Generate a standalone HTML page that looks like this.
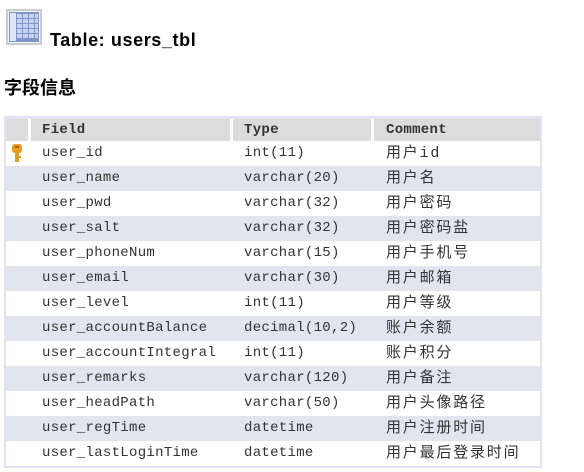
<!DOCTYPE html>
<html><head><meta charset="utf-8"><style>
body{margin:0;width:584px;height:472px;background:#fff;position:relative;overflow:hidden;font-family:"Liberation Sans","Noto Sans CJK SC",sans-serif}
.t{position:absolute;left:50px;top:30px;font-weight:bold;font-size:18px;letter-spacing:0.6px;color:#000}
.h{position:absolute;left:4px;top:74px;font-weight:bold;font-size:18px;color:#000}
.tbl{position:absolute;left:4px;top:116px;width:534px;border:2px solid #e6e0f4;border-top-width:3px}
.r{height:25px;position:relative;font-family:"Liberation Mono","Noto Sans CJK SC",monospace;font-size:14px;letter-spacing:0.3px;color:#333;line-height:25px}
.r span{position:absolute;top:0}
.a{left:36px}.b{left:238px}.c{left:380px;font-size:15px;letter-spacing:1.8px}
.s{background:#e3e5ee}
.hd{height:22px;line-height:22px;background:#fff;font-weight:bold}
.hd .c{font-size:14px;letter-spacing:0.3px}
.hd i{position:absolute;top:0;height:22px;background:#dcdcdc}
</style></head><body>
<svg style="position:absolute;left:6px;top:9px" width="36" height="36" viewBox="0 0 36 36">
<rect x="0" y="0" width="36" height="36" fill="#c8ccd4"/>
<rect x="2" y="2" width="32" height="32" fill="#f4f6fa"/>
<rect x="3" y="3" width="30" height="30" fill="#7f97c8"/>
<rect x="4" y="4" width="6" height="28" fill="#dfe6f4"/>
<g fill="#c7d3ee">
<rect x="11" y="5" width="5" height="4"/><rect x="17" y="5" width="5" height="4"/><rect x="23" y="5" width="5" height="4"/><rect x="29" y="5" width="3" height="4"/>
<rect x="11" y="10" width="5" height="4"/><rect x="17" y="10" width="5" height="4"/><rect x="23" y="10" width="5" height="4"/><rect x="29" y="10" width="3" height="4"/>
<rect x="11" y="15" width="5" height="4"/><rect x="17" y="15" width="5" height="4"/><rect x="23" y="15" width="5" height="4"/><rect x="29" y="15" width="3" height="4"/>
<rect x="11" y="20" width="5" height="4"/><rect x="17" y="20" width="5" height="4"/><rect x="23" y="20" width="5" height="4"/><rect x="29" y="20" width="3" height="4"/>
<rect x="11" y="25" width="5" height="4"/><rect x="17" y="25" width="5" height="4"/><rect x="23" y="25" width="5" height="4"/><rect x="29" y="25" width="3" height="4"/>
</g>
</svg>
<div class="t">Table: users_tbl</div>
<div class="h">字段信息</div>
<div class="tbl">
<div class="r hd"><i style="left:0;width:22px"></i><i style="left:25px;width:199px"></i><i style="left:227px;width:138px"></i><i style="left:368px;width:166px"></i><span class="a">Field</span><span class="b">Type</span><span class="c">Comment</span></div>
<div class="r"><svg style="position:absolute;left:5px;top:3px" width="12" height="20" viewBox="0 0 12 20"><rect x="1" y="0" width="10" height="9" rx="3" fill="#e89a1a"/><rect x="4" y="8" width="4" height="10" fill="#e89a1a"/><rect x="8" y="12" width="2" height="2" fill="#e89a1a"/><rect x="4" y="2" width="4" height="2" fill="#a35a00"/></svg><span class="a">user_id</span><span class="b">int(11)</span><span class="c">用户id</span></div>
<div class="r s"><span class="a">user_name</span><span class="b">varchar(20)</span><span class="c">用户名</span></div>
<div class="r"><span class="a">user_pwd</span><span class="b">varchar(32)</span><span class="c">用户密码</span></div>
<div class="r s"><span class="a">user_salt</span><span class="b">varchar(32)</span><span class="c">用户密码盐</span></div>
<div class="r"><span class="a">user_phoneNum</span><span class="b">varchar(15)</span><span class="c">用户手机号</span></div>
<div class="r s"><span class="a">user_email</span><span class="b">varchar(30)</span><span class="c">用户邮箱</span></div>
<div class="r"><span class="a">user_level</span><span class="b">int(11)</span><span class="c">用户等级</span></div>
<div class="r s"><span class="a">user_accountBalance</span><span class="b">decimal(10,2)</span><span class="c">账户余额</span></div>
<div class="r"><span class="a">user_accountIntegral</span><span class="b">int(11)</span><span class="c">账户积分</span></div>
<div class="r s"><span class="a">user_remarks</span><span class="b">varchar(120)</span><span class="c">用户备注</span></div>
<div class="r"><span class="a">user_headPath</span><span class="b">varchar(50)</span><span class="c">用户头像路径</span></div>
<div class="r s"><span class="a">user_regTime</span><span class="b">datetime</span><span class="c">用户注册时间</span></div>
<div class="r"><span class="a">user_lastLoginTime</span><span class="b">datetime</span><span class="c">用户最后登录时间</span></div>
</div>
</body></html>
